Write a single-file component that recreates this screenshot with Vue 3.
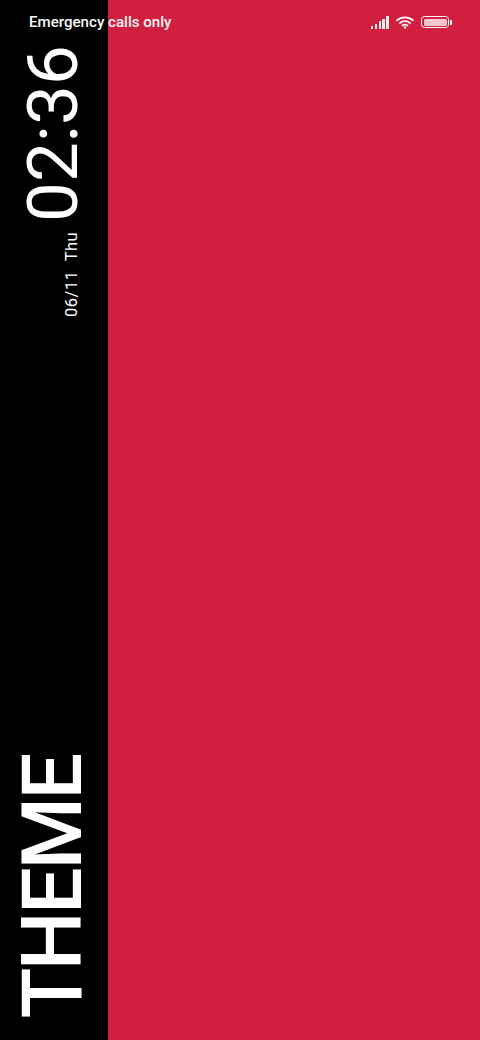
<script setup>
const bars = [3, 5, 8, 10, 13]
</script>

<template>
  <div class="screen">
    <aside class="rail">
      <div class="clock">
        <div class="time">02:36</div>
        <div class="date">06/11&nbsp;&nbsp;Thu</div>
      </div>
      <div class="title">THEME</div>
    </aside>
    <main class="panel"></main>
    <header class="status">
      <span class="carrier">Emergency calls only</span>
      <div class="icons">
        <div class="signal">
          <i v-for="(b, n) in bars" :key="n" :style="{ height: b + 'px' }"></i>
        </div>
        <svg class="wifi" width="18" height="13" viewBox="0 0 19 14" fill="none" stroke="#fff" stroke-width="1.9" stroke-linecap="round">
          <path d="M1 4.6C5.8.4 13.2.4 18 4.6" />
          <path d="M4 7.6c3.2-2.7 7.8-2.7 11 0" />
          <path d="M6.8 10.2c1.6-1.2 3.8-1.2 5.4 0" />
          <circle cx="9.5" cy="12.4" r="1.3" fill="#fff" stroke="none" />
        </svg>
        <div class="battery"><span class="level"></span></div>
      </div>
    </header>
  </div>
</template>

<style>
html, body { margin: 0; background: #d21f3f; }
</style>

<style scoped>
.screen {
  position: relative;
  display: flex;
  width: 480px;
  height: 1040px;
  overflow: hidden;
  background: #d21f3f;
  color: #fff;
}
.rail {
  width: 108px;
  flex: none;
  background: #000;
  display: flex;
  flex-direction: column;
  justify-content: space-between;
  align-items: flex-start;
  padding: 45px 0 22px;
  box-sizing: border-box;
}
.panel { flex: 1; }
.clock {
  writing-mode: vertical-rl;
  transform: rotate(180deg);
  display: flex;
  flex-direction: row-reverse;
  align-items: flex-end;
  margin-left: 19px;
  justify-content: flex-start;
}
.time {
  font-family: Roboto, sans-serif;
  font-weight: 400;
  font-size: 71px;
  line-height: 68px;
}
.date {
  font-family: Roboto, sans-serif;
  font-size: 16.5px;
  line-height: 20px;
  letter-spacing: 0.5px;
  margin-left: 5px;
  margin-bottom: 10px;
}
.title {
  writing-mode: vertical-rl;
  transform: rotate(180deg);
  font-family: Roboto, sans-serif;
  font-weight: 500;
  font-size: 83px;
  line-height: 84px;
  letter-spacing: -2.5px;
  margin-left: 11px;
}
.status {
  position: absolute;
  top: 0;
  left: 0;
  right: 0;
  height: 44px;
  display: flex;
  align-items: center;
  justify-content: space-between;
  padding: 0 31px 0 29px;
  box-sizing: border-box;
}
.carrier {
  font-family: Roboto, sans-serif;
  font-weight: 500;
  font-size: 15.1px;
  color: #f8f8f8;
}
.icons { display: flex; align-items: center; gap: 7px; }
.signal { display: flex; align-items: flex-end; gap: 1.4px; height: 13px; width: 18px; }
.signal i { display: block; width: 2.4px; background: #fff; opacity: 0.9; }
.battery {
  position: relative;
  width: 23px;
  height: 7px;
  border: 1.5px solid #fff;
  border-radius: 3.5px;
  padding: 1.5px;
  box-sizing: content-box;
}
.battery::after {
  content: "";
  position: absolute;
  right: -3.5px;
  top: 2.5px;
  width: 1.5px;
  height: 5px;
  background: #fff;
  border-radius: 0 1px 1px 0;
}
.level { display: block; height: 100%; background: #fff; opacity: 0.75; border-radius: 1.5px; }
</style>
